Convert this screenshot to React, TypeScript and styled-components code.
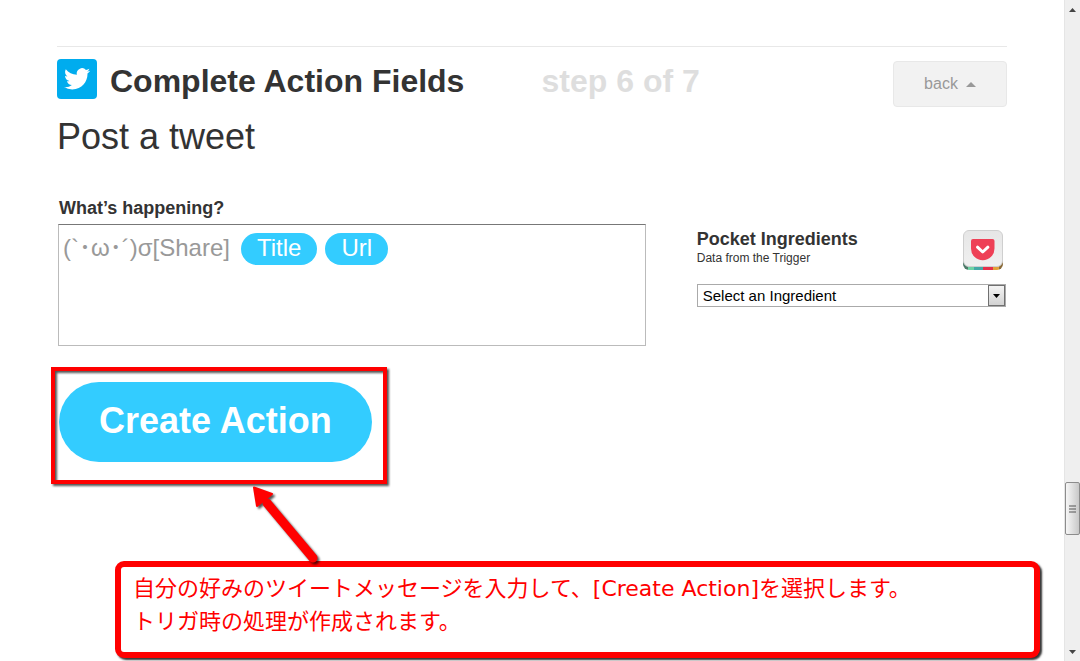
import React from "react";
import styled, { createGlobalStyle } from "styled-components";

const GlobalStyle = createGlobalStyle`
  *, *::before, *::after { box-sizing: border-box; }
  body {
    margin: 0;
    background: #fff;
    color: #333;
    font-family: "Liberation Sans", Arial, "Noto Sans CJK JP", sans-serif;
  }
  h1, h2, h3, p { margin: 0; }
  button, input, select { font-family: inherit; }
`;

const Window = styled.div`
  display: flex;
  min-height: 100vh;
`;

const Page = styled.main`
  flex: 1;
  min-width: 0;
  padding-top: 46px;
`;

const Step = styled.section`
  margin: 0 57px;
  border-top: 1px solid #e8e8e8;
`;

const StepHeader = styled.header`
  display: grid;
  grid-template-columns: 51% 1fr auto;
  align-items: start;
  padding-top: 12px;
`;

const Heading = styled.div`
  display: flex;
  align-items: flex-start;
  gap: 13px;
`;

const HeadingText = styled.h1`
  font-size: 32px;
  line-height: 44px;
  white-space: nowrap;
`;

const StepCount = styled.p`
  color: #dedede;
  font-size: 32px;
  font-weight: bold;
  line-height: 44px;
`;

const BackButton = styled.button`
  display: flex;
  align-items: center;
  justify-content: center;
  gap: 8px;
  width: 114px;
  height: 46px;
  margin-top: 2px;
  padding: 0;
  border: 1px solid #e8e8e8;
  border-radius: 4px;
  background: #f2f2f2;
  color: #999;
  font-size: 16px;
`;

const ActionName = styled.h2`
  font-size: 36px;
  font-weight: normal;
  line-height: 44px;
  margin-top: 8px;
`;

const Fields = styled.div`
  display: grid;
  grid-template-columns: 62% 1fr;
  column-gap: 51px;
  padding: 37px 1px 0;
`;

const FieldLabel = styled.label`
  display: block;
  padding-left: 1px;
  font-size: 18px;
  font-weight: bold;
  line-height: 24px;
`;

const Editor = styled.div`
  display: flex;
  align-items: flex-start;
  gap: 8px;
  height: 122px;
  margin-top: 4px;
  padding: 4px;
  border: 1px solid #bbb;
  border-top-color: #777;
`;

const MessageInput = styled.input`
  width: 170px;
  height: 32px;
  padding: 0;
  border: 0;
  outline: 0;
  background: none;
  color: #999;
  font-size: 24px;
`;

const Pill = styled.button`
  height: 32px;
  margin-top: 4px;
  padding: 0 16px 2px;
  border: 0;
  border-radius: 16px;
  background: #3cf;
  color: #fff;
  font-size: 24px;
  line-height: 28px;
`;

const Ingredients = styled.aside`
  padding-top: 34px;
`;

const IngredientsHeader = styled.div`
  display: flex;
  justify-content: space-between;
  padding-right: 3px;
`;

const IngredientsTitle = styled.h3`
  font-size: 18px;
  line-height: 18px;
`;

const IngredientsNote = styled.p`
  font-size: 12px;
  line-height: 20px;
`;

const SelectWrap = styled.div`
  position: relative;
  display: flex;
  margin-top: 14px;
`;

const Select = styled.select`
  appearance: none;
  width: 100%;
  height: 23px;
  padding: 0 20px 0 5px;
  border: 1px solid #aaa;
  border-radius: 0;
  background: #fff;
  color: #000;
  font-size: 15px;
`;

const SelectArrow = styled.span`
  position: absolute;
  top: 1px;
  right: 1px;
  bottom: 1px;
  display: grid;
  place-items: center;
  width: 17px;
  border: 1px solid #707070;
  background: linear-gradient(#f4f4f4, #d2d2d2);
  pointer-events: none;
`;

const ButtonArea = styled.div`
  position: relative;
  width: max-content;
  margin: 36px 0 0 2px;
`;

const CreateButton = styled.button`
  display: block;
  height: 80px;
  padding: 0 40px 3px;
  border: 0;
  border-radius: 40px;
  background: #3cf;
  color: #fff;
  font-size: 36px;
  font-weight: bold;
`;

const Highlight = styled.div`
  position: absolute;
  inset: -15px -15px -22px -8px;
  border: 4px solid #f00;
  filter: drop-shadow(2px 2px 1px #000a);
  pointer-events: none;
`;

const Pointer = styled.svg`
  position: absolute;
  top: 100px;
  left: 188px;
  filter: drop-shadow(2px 2px 1px #000a);
  pointer-events: none;
`;

const Callout = styled.p`
  min-height: 97px;
  margin: 99px 24px 3px 115px;
  padding: 5px 12px;
  border: 6px solid #f00;
  border-radius: 9px;
  background: #fff;
  box-shadow: 2px 2px 2px #000c;
  color: #f00;
  font-family: "DejaVu Sans", "Noto Sans CJK JP", sans-serif;
  font-size: 22px;
  line-height: 33px;
`;

const CalloutLine = styled.span`
  display: block;
`;

const ScrollTrack = styled.div`
  display: flex;
  flex-direction: column;
  align-items: center;
  width: 16px;
  padding: 8px 0 7px;
  border-left: 1px solid #e5e5e5;
  background: #efefef;
`;

const ScrollThumb = styled.div`
  display: grid;
  place-items: center;
  width: 15px;
  height: 53px;
  margin: auto 0 115px;
  border: 1px solid #8c8c8c;
  border-radius: 2px;
  background: linear-gradient(90deg, #f6f6f6, #e2e2e2 45%, #c8c8c8);
`;

function TwitterIcon() {
  return (
    <svg width="40" height="40" viewBox="0 0 40 40" aria-hidden="true">
      <rect width="40" height="40" rx="4" fill="#00acee" />
      <path
        transform="translate(7 6.8) scale(1.09)"
        fill="#fff"
        d="M23.95 4.57a10 10 0 0 1-2.82.77 4.96 4.96 0 0 0 2.16-2.72c-.95.55-2 .95-3.12 1.18a4.92 4.92 0 0 0-8.38 4.48C7.69 8.1 4.07 6.13 1.64 3.16a4.92 4.92 0 0 0 1.52 6.57 4.9 4.9 0 0 1-2.23-.61v.06c0 2.38 1.7 4.37 3.95 4.82a5 5 0 0 1-2.21.09 4.94 4.94 0 0 0 4.6 3.42A9.87 9.87 0 0 1 0 19.54a14 14 0 0 0 7.55 2.21c9.05 0 14-7.5 14-13.98 0-.21 0-.42-.02-.63a9.94 9.94 0 0 0 2.46-2.55z"
      />
    </svg>
  );
}

function PocketIcon() {
  return (
    <svg width="40" height="40" viewBox="0 0 40 40" aria-hidden="true">
      <defs>
        <linearGradient id="tile" x1="0" y1="0" x2="0" y2="1">
          <stop offset="0" stopColor="#e6e6e6" />
          <stop offset="1" stopColor="#f0f0f0" />
        </linearGradient>
        <clipPath id="tileBase">
          <rect y="2" width="40" height="38" rx="6" />
        </clipPath>
      </defs>
      <g clipPath="url(#tileBase)">
        <path fill="#4d7a69" d="M0 28h5v12H0z" />
        <path fill="#6fd3a5" d="M5 28h6v12H5z" />
        <path fill="#43a9a7" d="M11 28h9v12h-9z" />
        <path fill="#e5304a" d="M20 28h10v12H20z" />
        <path fill="#e2a13a" d="M30 28h6v12h-6z" />
        <path fill="#8a6a38" d="M36 28h4v12h-4z" />
      </g>
      <rect x=".5" y=".5" width="39" height="36" rx="5.5" fill="url(#tile)" stroke="#cfcfcf" />
      <path
        fill="#ee4056"
        d="M10 9h19.500q2 0 2 2V18.500a11.700 11.700 0 0 1-23.500 0V11Q8 9 10 9z"
      />
      <path
        d="M14.500 17.200l5.200 4.800 5.200-4.800"
        fill="none"
        stroke="#fff"
        strokeWidth="3"
        strokeLinecap="round"
        strokeLinejoin="round"
      />
    </svg>
  );
}

export default function App() {
  return (
    <>
      <GlobalStyle />
      <Window>
        <Page>
          <Step>
            <StepHeader>
              <Heading>
                <TwitterIcon />
                <HeadingText>Complete Action Fields</HeadingText>
              </Heading>
              <StepCount>step 6 of 7</StepCount>
              <BackButton type="button">
                back
                <svg width="10" height="5" viewBox="0 0 10 5" aria-hidden="true">
                  <path d="M5 0l5 5H0z" fill="#999" />
                </svg>
              </BackButton>
            </StepHeader>
            <ActionName>Post a tweet</ActionName>
            <Fields>
              <div>
                <FieldLabel htmlFor="message">What’s happening?</FieldLabel>
                <Editor>
                  <MessageInput id="message" defaultValue="(`･ω･´)σ[Share]" />
                  <Pill type="button">Title</Pill>
                  <Pill type="button">Url</Pill>
                </Editor>
              </div>
              <Ingredients>
                <IngredientsHeader>
                  <div>
                    <IngredientsTitle>Pocket Ingredients</IngredientsTitle>
                    <IngredientsNote>Data from the Trigger</IngredientsNote>
                  </div>
                  <PocketIcon />
                </IngredientsHeader>
                <SelectWrap>
                  <Select aria-label="Pocket Ingredients" defaultValue="none">
                    <option value="none">Select an Ingredient</option>
                  </Select>
                  <SelectArrow>
                    <svg width="7" height="4" viewBox="0 0 7 4" aria-hidden="true">
                      <path d="M0 0h7L3.500 4z" fill="#000" />
                    </svg>
                  </SelectArrow>
                </SelectWrap>
              </Ingredients>
            </Fields>
            <ButtonArea>
              <CreateButton type="button">Create Action</CreateButton>
              <Highlight />
              <Pointer width="80" height="84" viewBox="0 0 80 84" aria-hidden="true">
                <path d="M20 21L66 76" stroke="#f00" strokeWidth="9" strokeLinecap="round" />
                <path
                  d="M7 5.500L25 12L10 24z"
                  fill="#f00"
                  stroke="#f00"
                  strokeWidth="2"
                  strokeLinejoin="round"
                />
              </Pointer>
            </ButtonArea>
          </Step>
          <Callout>
            <CalloutLine>
              自分の好みのツイートメッセージを入力して、[Create Action]を選択します。
            </CalloutLine>
            <CalloutLine>トリガ時の処理が作成されます。</CalloutLine>
          </Callout>
        </Page>
        <ScrollTrack aria-hidden="true">
          <svg width="7" height="4" viewBox="0 0 7 4">
            <path d="M3.500 0L7 4H0z" fill="#444" />
          </svg>
          <ScrollThumb>
            <svg width="7" height="8" viewBox="0 0 7 8">
              <path d="M0 1h7M0 4h7M0 7h7" stroke="#555" />
            </svg>
          </ScrollThumb>
          <svg width="7" height="4" viewBox="0 0 7 4">
            <path d="M0 0h7L3.500 4z" fill="#444" />
          </svg>
        </ScrollTrack>
      </Window>
    </>
  );
}
